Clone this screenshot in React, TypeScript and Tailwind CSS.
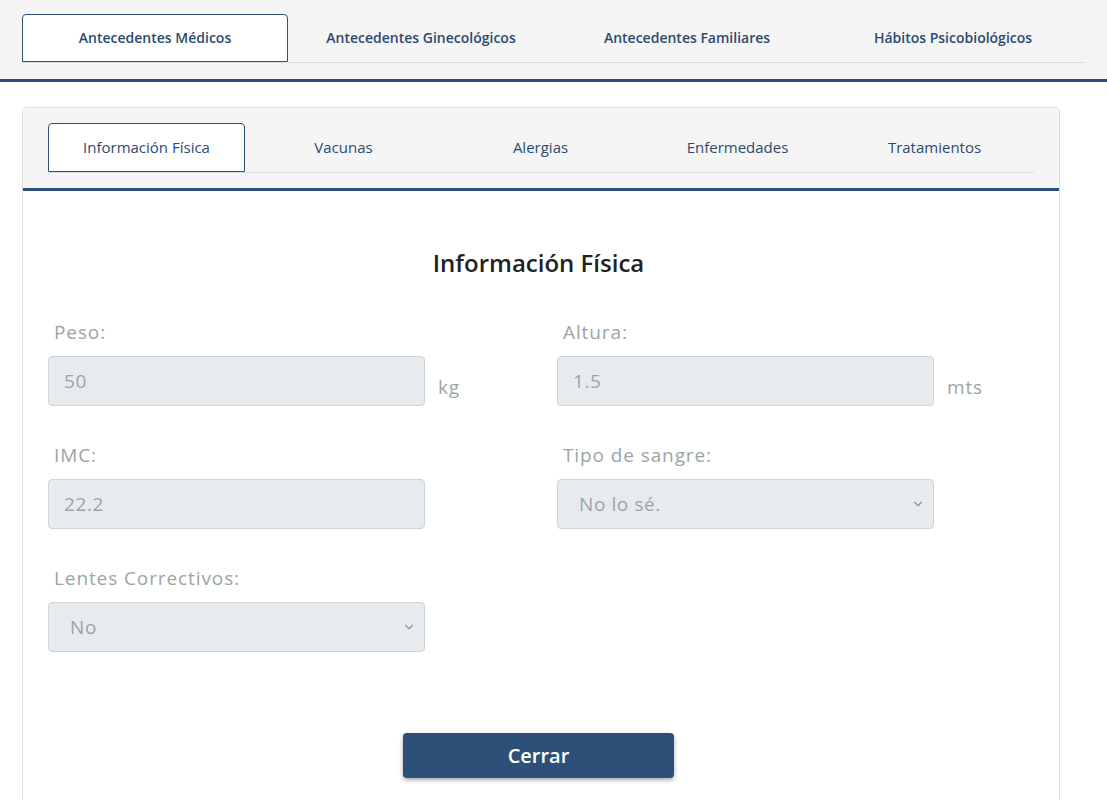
import { ChevronDown } from "lucide-react";

const topTabs = [
  "Antecedentes Médicos",
  "Antecedentes Ginecológicos",
  "Antecedentes Familiares",
  "Hábitos Psicobiológicos",
];

const innerTabs = [
  "Información Física",
  "Vacunas",
  "Alergias",
  "Enfermedades",
  "Tratamientos",
];

function Field({
  label,
  value,
  unit,
  select,
}: {
  label: string;
  value: string;
  unit?: string;
  select?: boolean;
}) {
  return (
    <div className="flex flex-col">
      <label className="pl-[6px] text-[19px] leading-[24px] tracking-[0.9px] text-[#9aa5a6]">
        {label}
      </label>
      <div className="mt-[12px] flex items-start">
        <div className="flex h-[50px] w-[377px] items-center justify-between rounded-[4px] border border-[#ced4da] bg-[#e8ebee] text-[19px] tracking-[0.6px] text-[#9aa5a6]">
          <span className={select ? "pl-[21px]" : "pl-[15px]"}>{value}</span>
          {select && (
            <ChevronDown className="mr-[8px] h-[14px] w-[14px] text-[#8a9395]" strokeWidth={2} />
          )}
        </div>
        {unit && (
          <span className="ml-[13px] mt-[19px] text-[19px] leading-[24px] tracking-[0.8px] text-[#9aa5a6]">
            {unit}
          </span>
        )}
      </div>
    </div>
  );
}

export default function App() {
  return (
    <div
      className="min-h-[800px] bg-white"
      style={{ fontFamily: '"Open Sans", "Noto Sans", sans-serif' }}
    >
      {/* Top tabs */}
      <div className="border-b-[3px] border-[#2c5078] bg-[#f5f5f5] px-[22px] pb-[16px] pt-[14px]">
        <div className="flex w-[1064px] border-b border-[#dedede]">
          {topTabs.map((t, i) => (
            <div
              key={t}
              className={
                i === 0
                  ? "-mb-px flex h-[48px] w-[266px] items-center justify-center rounded-t-[4px] border border-[#2c5078] bg-white pb-[2px] text-[14px] font-semibold text-[#2c4a6e]"
                  : "flex h-[48px] w-[266px] items-center justify-center pb-[2px] text-[14px] font-semibold text-[#2c4a6e]"
              }
            >
              {t}
            </div>
          ))}
        </div>
      </div>

      {/* Card */}
      <div className="ml-[22px] mt-[25px] w-[1038px] rounded-t-[4px] border border-[#e0e0e0]">
        <div className="border-b-[3px] border-[#2c5078] bg-[#f5f5f5] px-[25px] pb-[15px] pt-[15px]">
          <div className="flex w-[986px] border-b border-[#dedede]">
            {innerTabs.map((t, i) => (
              <div
                key={t}
                className={
                  i === 0
                    ? "-mb-px flex h-[49px] w-[197px] items-center justify-center rounded-t-[4px] border border-[#2c5078] bg-white text-[15px] text-[#2c4a6e]"
                    : "flex h-[49px] w-[197px] items-center justify-center text-[15px] text-[#2c4a6e]"
                }
              >
                {t}
              </div>
            ))}
          </div>
        </div>

        <div className="pb-[30px] pl-[25px] pr-[30px] pt-[56px]">
          <h2 className="text-center text-[24px] font-semibold leading-[32px] text-[#222]">
            Información Física
          </h2>

          <div className="mt-[41px] grid grid-cols-[509px_1fr] gap-y-[37px]">
            <Field label="Peso:" value="50" unit="kg" />
            <Field label="Altura:" value="1.5" unit="mts" />
            <Field label="IMC:" value="22.2" />
            <Field label="Tipo de sangre:" value="No lo sé." select />
            <Field label="Lentes Correctivos:" value="No" select />
          </div>

          <div className="mt-[81px] flex justify-center">
            <button className="h-[45px] w-[271px] rounded-[4px] bg-[#2c5078] text-[20px] font-semibold text-white shadow-[0_2px_4px_rgba(0,0,0,0.35)]">
              Cerrar
            </button>
          </div>
        </div>
      </div>
    </div>
  );
}
